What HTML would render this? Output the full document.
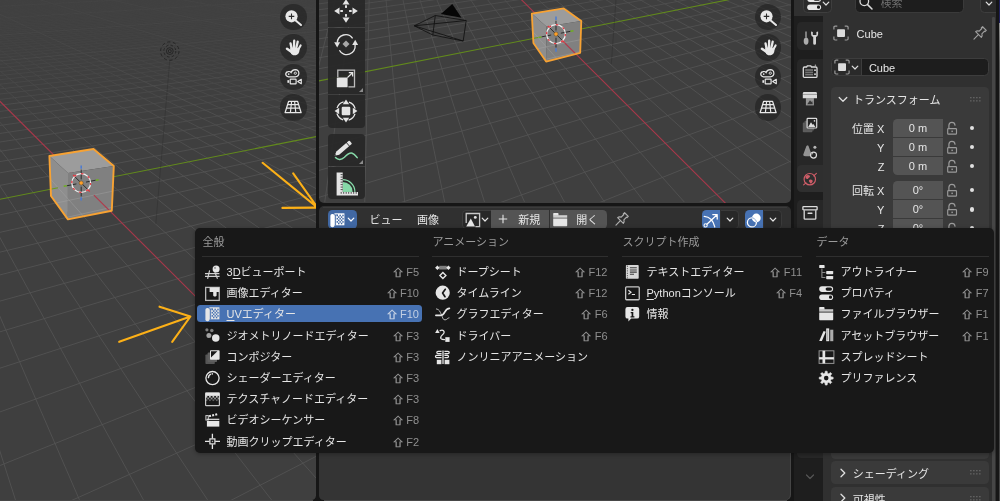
<!DOCTYPE html>
<html lang="ja"><head><meta charset="utf-8"><title>Blender - エディタータイプ</title>
<style>
*{box-sizing:border-box;margin:0;padding:0}
html,body{width:1000px;height:501px;overflow:hidden;background:#161616}
body{font-family:"Liberation Sans","Noto Sans CJK JP",sans-serif;font-size:11px;color:#e6e6e6;-webkit-font-smoothing:antialiased}
#root{will-change:transform;position:relative;width:1000px;height:501px;overflow:hidden;background:#161616}
.abs{position:absolute}
svg{display:block;overflow:visible}
/* ---------- menu ---------- */
#menu{position:absolute;left:195px;top:227.8px;width:799px;height:225.6px;background:#181818;border-radius:5px;box-shadow:0 1px 4px rgba(0,0,0,.32)}
#menu .hd{position:absolute;top:6.4px;height:16px;line-height:16px;color:#9a9a9a;font-size:11px;white-space:nowrap}
#menu .sep{position:absolute;top:28.2px;height:1px;background:#2f2f2f}
#menu .it{position:absolute;height:17px;border-radius:3.5px;white-space:nowrap}
#menu .it.sel{background:#4772b3}
#menu .it svg{position:absolute;left:7.5px;top:0.7px;width:16px;height:16px}
#menu .it .lb{position:absolute;left:29.5px;top:0;height:17px;line-height:19px;font-size:11px;color:#e6e6e6}
#menu .it .sc{position:absolute;right:3px;top:0;height:17px;line-height:19px;font-size:11px;color:#8f8f8f}
#menu .it.sel .sc{color:#c3cfe3}
#menu .it .sc i{font-style:normal;-webkit-text-stroke:0.45px currentColor;font-family:"Noto Sans CJK JP",sans-serif;font-size:11px;line-height:0;display:inline-block;width:9px;margin-right:4.5px;transform:translate(-0.6px,0.8px) scale(1.2,0.78);transform-origin:50% 50%;vertical-align:baseline}
u{text-decoration:underline;text-underline-offset:1.5px;text-decoration-thickness:1px}
/* ---------- viewports ---------- */
#lvp{position:absolute;left:0;top:0;width:316.2px;height:499.8px;background:#3f3f3f;overflow:hidden;border-radius:0 0 4.5px 0}
#mvp{position:absolute;left:319.2px;top:0;width:471.8px;height:202.5px;background:#3f3f3f;overflow:hidden;border-radius:0 0 5px 5px}
.nav{position:absolute;width:26.4px;height:26.4px;border-radius:50%;background:rgba(30,30,30,.6)}
.nav svg{position:absolute;left:3.2px;top:3.2px;width:20px;height:20px}
.nav svg{overflow:visible}
.tb{position:absolute;left:8.5px;width:37.7px;background:rgba(40,40,40,.93)}
.tb svg{position:absolute;left:4.6px;top:2.5px;width:28px;height:28px}
/* ---------- uv editor ---------- */
#uvh{position:absolute;left:319.2px;top:206px;width:471.8px;height:26px;background:#303030;border-radius:5px 5px 0 0}
#uvb{position:absolute;left:319.2px;top:232px;width:471.8px;height:267.8px;background:#343434;border-radius:0 0 5.5px 4.5px;box-shadow:inset -1px 0 0 #454545}
.bstrip{position:absolute;top:499.7px;height:1.3px;background:#484848}
#uvh .t{position:absolute;top:5px;height:18px;line-height:18.6px;font-size:11px;color:#e6e6e6;white-space:nowrap}
#uvh .btn{position:absolute;top:4.2px;height:18.6px}
/* ---------- properties ---------- */
#pr{position:absolute;left:794.4px;top:0;width:201.8px;height:501px;background:#303030;overflow:hidden}
#prtabs{position:absolute;left:0;top:16px;width:28.8px;height:485px;background:#1e1e1e}
.ptab{position:absolute;left:0;width:28.8px;height:26.6px}
.ptab svg{position:absolute;left:7.8px;top:5.3px;width:16px;height:16px}
.panel{position:absolute;left:36.8px;width:158px;background:#3a3a3a;border-radius:4.5px}
.panel .ph{position:absolute;left:22.5px;top:4px;height:17px;line-height:17.6px;font-size:11px;color:#e6e6e6;white-space:nowrap}
.fld{position:absolute;left:99px;width:49.2px;height:18.2px;background:#545454;text-align:center;line-height:18.8px;font-size:11px;color:#e6e6e6}
.flb{position:absolute;right:113px;height:18.4px;line-height:20.6px;font-size:11px;color:#e6e6e6;white-space:nowrap;text-align:right}
.dot{position:absolute;left:175.3px;width:4.4px;height:4.4px;border-radius:50%;background:#e0e0e0}

</style></head>
<body>
<div id="root">
<div id="lvp">
<svg class="abs" style="left:0;top:0;width:316.2px;height:501px" viewBox="0 0 316.2 501">
<defs><linearGradient id="lvpmfg" x1="0" y1="0" x2="0" y2="175" gradientUnits="userSpaceOnUse"><stop offset="0.000" stop-color="#fff" stop-opacity="0.1"/><stop offset="0.229" stop-color="#fff" stop-opacity="0.2"/><stop offset="0.457" stop-color="#fff" stop-opacity="0.45"/><stop offset="0.743" stop-color="#fff" stop-opacity="0.8"/><stop offset="1.000" stop-color="#fff" stop-opacity="1"/></linearGradient><mask id="lvpmf" maskUnits="userSpaceOnUse" x="0" y="0" width="316.2" height="501"><rect x="0" y="0" width="316.2" height="501" fill="url(#lvpmfg)"/></mask><linearGradient id="lvpmcg" x1="0" y1="0" x2="0" y2="150" gradientUnits="userSpaceOnUse"><stop offset="0.000" stop-color="#fff" stop-opacity="0.22"/><stop offset="0.267" stop-color="#fff" stop-opacity="0.38"/><stop offset="0.667" stop-color="#fff" stop-opacity="0.8"/><stop offset="1.000" stop-color="#fff" stop-opacity="1"/></linearGradient><mask id="lvpmc" maskUnits="userSpaceOnUse" x="0" y="0" width="316.2" height="501"><rect x="0" y="0" width="316.2" height="501" fill="url(#lvpmcg)"/></mask></defs>
<g mask="url(#lvpmf)"><path d="M-20.0 -19.8L-13.0 -20.0M-20.0 -19.4L-1.0 -20.0M-20.0 -19.0L11.0 -20.0M-20.0 -18.2L35.1 -20.0M-20.0 -17.8L47.1 -20.0M-20.0 -17.3L59.1 -20.0M-20.0 -16.9L71.2 -20.0M-20.0 -16.4L83.2 -20.0M-20.0 -16.0L95.2 -20.0M-20.0 -15.5L107.3 -20.0M-20.0 -15.1L119.3 -20.0M-20.0 -14.6L131.3 -20.0M-20.0 -13.6L155.4 -20.0M-20.0 -13.1L167.4 -20.0M-20.0 -12.6L179.4 -20.0M-20.0 -12.0L191.5 -20.0M-20.0 -11.5L203.5 -20.0M-20.0 -10.9L215.5 -20.0M-20.0 -10.4L227.6 -20.0M-20.0 -9.8L239.6 -20.0M-20.0 -9.2L251.6 -20.0M-20.0 -8.0L275.7 -20.0M-20.0 -7.3L287.7 -20.0M-20.0 -6.7L299.7 -20.0M-20.0 -6.0L311.8 -20.0M-20.0 -5.3L323.8 -20.0M-20.0 -4.6L335.8 -20.0M-20.0 -3.9L336.2 -19.5M-20.0 -3.2L336.2 -19.0M-20.0 -2.4L336.2 -18.4M-20.0 -0.8L336.2 -17.2M-20.0 -0.0L336.2 -16.6M-20.0 0.8L336.2 -16.0M-20.0 1.7L336.2 -15.4M-20.0 2.5L336.2 -14.8M-20.0 3.5L336.2 -14.1M-20.0 4.4L336.2 -13.4M-20.0 5.3L336.2 -12.7M-20.0 6.3L336.2 -12.0M-20.0 8.4L336.2 -10.5M-20.0 9.5L336.2 -9.7M-20.0 10.6L336.2 -8.9M-20.0 11.7L336.2 -8.0M-20.0 12.9L336.2 -7.1M-20.0 14.1L336.2 -6.3M-20.0 15.4L336.2 -5.3M-20.0 16.7L336.2 -4.4M-20.0 18.0L336.2 -3.4M-20.0 20.9L336.2 -1.3M-20.0 22.4L336.2 -0.2M-20.0 23.9L336.2 0.9M-20.0 25.5L336.2 2.1M-20.0 27.2L336.2 3.3M-20.0 28.9L336.2 4.6M-20.0 30.7L336.2 5.9M-20.0 32.6L336.2 7.3M-20.0 34.5L336.2 8.7M-20.0 38.7L336.2 11.8M-20.0 40.9L336.2 13.4M-20.0 43.2L336.2 15.1M-20.0 45.6L336.2 16.9M-20.0 48.1L336.2 18.7M-20.0 50.8L336.2 20.7M-20.0 53.6L336.2 22.7M-20.0 56.5L336.2 24.8M-20.0 59.5L336.2 27.1M-20.0 66.2L336.2 32.0M-20.0 69.8L336.2 34.6M-20.0 73.6L336.2 37.4M-20.0 77.6L336.2 40.3M-20.0 81.8L336.2 43.5M-20.0 86.4L336.2 46.8M-20.0 91.2L336.2 50.3M-20.0 96.4L336.2 54.1M-20.0 101.9L336.2 58.2M-20.0 114.1L336.2 67.2M-20.0 121.0L336.2 72.2M-20.0 128.3L336.2 77.6M-20.0 136.4L336.2 83.5M-20.0 388.9L22.2 521.0M-20.0 145.1L336.2 89.9M-20.0 270.4L88.6 521.0M-20.0 154.6L336.2 96.9M-20.0 201.2L155.0 521.0M-20.0 165.0L336.2 104.5M-20.0 155.8L221.5 521.0M-20.0 176.4L336.2 112.9M-20.0 123.7L287.9 521.0M-20.0 189.1L336.2 122.2M-20.0 99.8L336.2 500.7M-20.0 219.0L336.2 144.2M-20.0 66.7L336.2 385.8M-20.0 236.8L336.2 157.2M-20.0 54.8L336.2 344.3M-20.0 256.9L336.2 172.0M-20.0 44.8L336.2 309.9M-20.0 280.0L336.2 189.0M-20.0 36.4L336.2 280.8M-20.0 306.6L336.2 208.5M-20.0 29.3L336.2 255.9M-20.0 337.8L336.2 231.4M-20.0 23.1L336.2 234.4M-20.0 374.7L336.2 258.5M-20.0 17.7L336.2 215.6M-20.0 419.1L336.2 291.1M-20.0 12.9L336.2 199.1M-20.0 473.5L336.2 331.1M-20.0 8.6L336.2 184.4M191.0 521.0L336.2 446.0M-20.0 1.5L336.2 159.5M-20.0 -1.6L336.2 148.8M-20.0 -4.4L336.2 139.1M-20.0 -7.0L336.2 130.3M-20.0 -9.3L336.2 122.2M-20.0 -11.5L336.2 114.7M-20.0 -13.4L336.2 107.8M-20.0 -15.3L336.2 101.5M-20.0 -17.0L336.2 95.6M-19.9 -20.0L336.2 85.0M-15.1 -20.0L336.2 80.2M-10.2 -20.0L336.2 75.7M-5.4 -20.0L336.2 71.5M-0.5 -20.0L336.2 67.5M4.3 -20.0L336.2 63.8M9.2 -20.0L336.2 60.3M14.0 -20.0L336.2 56.9M18.9 -20.0L336.2 53.8M28.6 -20.0L336.2 47.9M33.4 -20.0L336.2 45.2M38.2 -20.0L336.2 42.6M43.1 -20.0L336.2 40.2M47.9 -20.0L336.2 37.8M52.8 -20.0L336.2 35.6M57.6 -20.0L336.2 33.4M62.5 -20.0L336.2 31.4M67.3 -20.0L336.2 29.4M77.0 -20.0L336.2 25.7M81.9 -20.0L336.2 24.0M86.7 -20.0L336.2 22.3M91.5 -20.0L336.2 20.7M96.4 -20.0L336.2 19.2M101.2 -20.0L336.2 17.7M106.1 -20.0L336.2 16.2M110.9 -20.0L336.2 14.8M115.8 -20.0L336.2 13.5M125.5 -20.0L336.2 11.0M130.3 -20.0L336.2 9.8M135.2 -20.0L336.2 8.6M140.0 -20.0L336.2 7.4M144.8 -20.0L336.2 6.4M149.7 -20.0L336.2 5.3M154.5 -20.0L336.2 4.3M159.4 -20.0L336.2 3.3M164.2 -20.0L336.2 2.3M173.9 -20.0L336.2 0.4M178.8 -20.0L336.2 -0.5M183.6 -20.0L336.2 -1.3M188.5 -20.0L336.2 -2.2M193.3 -20.0L336.2 -3.0M198.1 -20.0L336.2 -3.8M203.0 -20.0L336.2 -4.6M207.8 -20.0L336.2 -5.3M212.7 -20.0L336.2 -6.1M222.4 -20.0L336.2 -7.5M227.2 -20.0L336.2 -8.1M232.1 -20.0L336.2 -8.8M236.9 -20.0L336.2 -9.5M241.8 -20.0L336.2 -10.1M246.6 -20.0L336.2 -10.7M251.4 -20.0L336.2 -11.3M256.3 -20.0L336.2 -11.9M261.1 -20.0L336.2 -12.5M270.8 -20.0L336.2 -13.6M275.7 -20.0L336.2 -14.1M280.5 -20.0L336.2 -14.7M285.4 -20.0L336.2 -15.2M290.2 -20.0L336.2 -15.7M295.1 -20.0L336.2 -16.2M299.9 -20.0L336.2 -16.7M304.8 -20.0L336.2 -17.1M309.6 -20.0L336.2 -17.6M319.3 -20.0L336.2 -18.5M324.1 -20.0L336.2 -18.9M329.0 -20.0L336.2 -19.4M333.8 -20.0L336.2 -19.8" stroke="#545454" stroke-width="0.85" fill="none"/></g>
<g mask="url(#lvpmc)"><path d="M-20.0 -18.6L23.0 -20.0M-20.0 -14.1L143.3 -20.0M-20.0 -8.6L263.6 -20.0M-20.0 -1.6L336.2 -17.8M-20.0 7.3L336.2 -11.2M-20.0 19.4L336.2 -2.4M-20.0 36.6L336.2 10.2M-20.0 62.8L336.2 29.5M-20.0 107.8L336.2 62.5M26.1 521.0L336.2 381.2M-20.0 4.9L336.2 171.3M-20.0 -18.6L336.2 90.1M23.7 -20.0L336.2 50.8M72.2 -20.0L336.2 27.5M120.6 -20.0L336.2 12.2M169.1 -20.0L336.2 1.3M217.5 -20.0L336.2 -6.8M266.0 -20.0L336.2 -13.1M314.4 -20.0L336.2 -18.1" stroke="#545454" stroke-width="0.85" fill="none"/></g>
<path d="M-20.0 81.4L336.2 436.7" stroke="#a8384a" stroke-width="1.1" fill="none"/>
<path d="M-20.0 203.2L336.2 132.6" stroke="#628a1c" stroke-width="1.1" fill="none"/>
<path d="M169.8 60.1L155.8 224" stroke="#1c1c1c" stroke-width="0.8" stroke-opacity="0.3"/><g fill="none" stroke="#161616" stroke-opacity=".7" stroke-width=".9"><circle cx="169.8" cy="51.1" r="9.2" stroke-dasharray="3.2 2.58"/><circle cx="169.8" cy="51.1" r="6" stroke-dasharray="2.6 2.11"/><circle cx="169.8" cy="51.1" r="3.4"/><circle cx="169.8" cy="51.1" r="1.5"/></g><polygon points="49.4,156.0 93.5,149.0 113.8,166.0 68.0,173.0" fill="#9c9c9c"/><polygon points="49.4,156.0 68.0,173.0 67.9,219.4 51.0,196.0" fill="#8e8e8e"/><polygon points="68.0,173.0 113.8,166.0 111.8,210.8 67.9,219.4" fill="#808080"/><clipPath id="lcc"><polygon points="49.4,156.0 93.5,149.0 113.8,166.0 111.8,210.8 67.9,219.4 51.0,196.0"/></clipPath><g clip-path="url(#lcc)"><path d="M-70.9 229.7L223.9 167.8M8.7 132.1L147.1 287.9M-65.4 246.9L241.7 178.3M-11.2 135.0L114.7 297.6M-59.2 266.3L261.2 189.9M-31.7 138.1L80.5 307.8" stroke="#b4b4b4" stroke-opacity=".38" stroke-width=".8" fill="none"/><path d="M93.9 195.1L228.9 329.7" stroke="#b03a4c" stroke-width="1.1"/><path d="M58.1 187.7L-137.7 226.6" stroke="#6b9a1e" stroke-width="1.1"/></g><polygon points="49.4,156.0 93.5,149.0 113.8,166.0 111.8,210.8 67.9,219.4 51.0,196.0" fill="none" stroke="#f7a233" stroke-width="1.90" stroke-linejoin="round"/><path d="M81.2 179.4L81.2 169.6M81.2 186.6L81.2 196.4M86.0 182.1L95.7 180.2M76.4 183.9L66.7 185.8M74.0 175.8L88.4 190.2" stroke="#1c1c1c" stroke-opacity=".85" stroke-width="1"/><circle cx="81.2" cy="183" r="9.4" fill="none" stroke="#f0f0f0" stroke-width="1.25"/><circle cx="81.2" cy="183" r="9.4" fill="none" stroke="#e63a44" stroke-width="1.25" stroke-dasharray="2.36 5.02" stroke-dashoffset="0.37"/><path d="M81.2 168.8L81.2 165.4M81.2 197.2L81.2 200.6" stroke="#4b7bd2" stroke-width="1.5"/><path d="M95.7 180.2L98.7 179.7M66.7 185.8L63.7 186.3" stroke="#6fae22" stroke-width="1.5"/><path d="M88.0 189.8L89.8 191.6M74.4 176.2L73.1 174.9" stroke="#e0353f" stroke-width="1.3"/><circle cx="81.2" cy="183" r="2.1" fill="#ffa028" stroke="#5a4a30" stroke-width=".5"/>
</svg>
<div class="nav" style="left:280.2px;top:4.1px"><svg viewBox="0 0 20 20" style="color:#e8e8e8"><path d="M12.4 13.2L18 18" stroke="currentColor" stroke-width="2" stroke-linecap="round"/><circle cx="8.5" cy="9.3" r="6.1" fill="currentColor"/><path d="M8.5 6.6V12.2M5.7 9.4H11.3" stroke="#2a2a2a" stroke-width="1.1"/></svg></div>
<div class="nav" style="left:280.2px;top:34.2px"><svg viewBox="0 0 20 20" style="color:#e8e8e8"><g stroke="currentColor" stroke-linecap="round" fill="none"><path d="M8.7 12L7.5 6.3M10.9 11L11.2 3.7M13.2 11.2L14.7 4.7" stroke-width="2.3"/><path d="M15.3 12.6L17.6 8.4" stroke-width="2.1"/><path d="M8.6 15L4 11.8" stroke-width="2.5"/></g><path d="M7.4 10.6L16.5 11.2Q17 15.8 14 17.8Q11.2 19.1 8.9 17.4Q6.6 15.4 7.4 10.6Z" fill="currentColor"/></svg></div>
<div class="nav" style="left:280.2px;top:64.0px"><svg viewBox="0 0 20 20" style="color:#e8e8e8"><path d="M5.2 4.6Q7 4.2 8.1 5.5Q9.2 2.6 12.2 2.6Q15.8 2.8 15.9 6.3Q15.8 9.6 12.2 9.8H5.6Q2.8 9.6 2.7 7.1Q2.8 5 5.2 4.6Z" fill="none" stroke="currentColor" stroke-width="1.2"/><circle cx="5.7" cy="7.1" r="0.85" fill="currentColor"/><circle cx="12.3" cy="6.2" r="1.15" fill="none" stroke="currentColor" stroke-width=".9"/><rect x="7.2" y="12.2" width="5.9" height="4.6" rx="0.6" fill="none" stroke="currentColor" stroke-width="1.2"/><path d="M14.7 14.5L18.3 12.3V16.7Z" fill="none" stroke="currentColor" stroke-width="1.1" stroke-linejoin="round"/><rect x="4.4" y="13.2" width="1.7" height="2.6" fill="currentColor"/></svg></div>
<div class="nav" style="left:280.2px;top:94.4px"><svg viewBox="0 0 20 20" style="color:#e8e8e8"><path d="M5.6 3.4H14.6L18.1 14.6H2.1Z" fill="none" stroke="currentColor" stroke-width="1.3" stroke-linejoin="round"/><path d="M8.6 3.4L7.4 14.6M11.6 3.4L12.8 14.6M4.7 6.6H15.5M3.6 10.1H16.6" fill="none" stroke="currentColor" stroke-width="1.15"/></svg></div>
</div>
<div id="mvp">
<svg class="abs" style="left:0;top:0;width:471.8px;height:202.5px" viewBox="0 0 471.8 202.5">
<defs><linearGradient id="mvpmfg" x1="0" y1="-40" x2="0" y2="40" gradientUnits="userSpaceOnUse"><stop offset="0.000" stop-color="#fff" stop-opacity="0.5"/><stop offset="0.625" stop-color="#fff" stop-opacity="0.85"/><stop offset="1.000" stop-color="#fff" stop-opacity="1"/></linearGradient><mask id="mvpmf" maskUnits="userSpaceOnUse" x="0" y="0" width="471.8" height="202.5"><rect x="0" y="0" width="471.8" height="202.5" fill="url(#mvpmfg)"/></mask><linearGradient id="mvpmcg" x1="0" y1="-40" x2="0" y2="30" gradientUnits="userSpaceOnUse"><stop offset="0.000" stop-color="#fff" stop-opacity="0.7"/><stop offset="0.714" stop-color="#fff" stop-opacity="0.95"/><stop offset="1.000" stop-color="#fff" stop-opacity="1"/></linearGradient><mask id="mvpmc" maskUnits="userSpaceOnUse" x="0" y="0" width="471.8" height="202.5"><rect x="0" y="0" width="471.8" height="202.5" fill="url(#mvpmcg)"/></mask></defs>
<g mask="url(#mvpmf)"><path d="M-20.0 -17.9L-1.0 -20.0M-20.0 -13.6L35.4 -20.0M-8.1 -20.0L-20.0 4.9M-20.0 -9.1L71.9 -20.0M6.5 -20.0L-20.0 53.1M-20.0 -4.3L108.3 -20.0M21.2 -20.0L-20.0 145.3M-20.0 6.5L181.2 -20.0M50.6 -20.0L45.3 222.5M-20.0 12.5L217.6 -20.0M65.2 -20.0L87.6 222.5M-20.0 19.0L254.1 -20.0M79.9 -20.0L129.9 222.5M-20.0 26.1L290.5 -20.0M94.6 -20.0L172.1 222.5M-20.0 33.7L326.9 -20.0M109.3 -20.0L214.4 222.5M-20.0 42.1L363.4 -20.0M124.0 -20.0L256.7 222.5M-20.0 51.3L399.8 -20.0M138.6 -20.0L299.0 222.5M-20.0 61.4L436.3 -20.0M153.3 -20.0L341.2 222.5M-20.0 72.5L472.7 -20.0M168.0 -20.0L383.5 222.5M-20.0 98.8L491.8 -8.7M197.3 -20.0L468.0 222.5M-20.0 114.4L491.8 0.1M212.0 -20.0L491.8 207.4M-20.0 132.2L491.8 10.2M226.7 -20.0L491.8 177.3M-20.0 152.5L491.8 21.7M241.4 -20.0L491.8 151.8M-20.0 175.9L491.8 35.0M256.0 -20.0L491.8 130.0M-20.0 203.3L491.8 50.5M270.7 -20.0L491.8 111.2M20.8 222.5L491.8 68.9M285.4 -20.0L491.8 94.7M125.8 222.5L491.8 91.0M300.1 -20.0L491.8 80.2M230.7 222.5L491.8 118.1M314.8 -20.0L491.8 67.4M440.6 222.5L491.8 196.1M344.1 -20.0L491.8 45.5M358.8 -20.0L491.8 36.2M373.5 -20.0L491.8 27.7M388.1 -20.0L491.8 19.9M402.8 -20.0L491.8 12.8M417.5 -20.0L491.8 6.3M432.2 -20.0L491.8 0.3M446.8 -20.0L491.8 -5.3M461.5 -20.0L491.8 -10.4M490.9 -20.0L491.8 -19.7" stroke="#545454" stroke-width="0.85" fill="none"/></g>
<g mask="url(#mvpmc)"><path d="M-20.0 0.9L144.8 -20.0M35.9 -20.0L3.0 222.5M335.7 222.5L491.8 152.1M329.4 -20.0L491.8 55.9M476.2 -20.0L491.8 -15.2" stroke="#545454" stroke-width="0.85" fill="none"/></g>
<path d="M182.7 -20.0L425.8 222.5" stroke="#a8384a" stroke-width="1.1" fill="none"/>
<path d="M-20.0 84.9L491.8 -16.6" stroke="#628a1c" stroke-width="1.1" fill="none"/>
<g stroke="#101010" stroke-width="0.85" fill="none" stroke-linejoin="round"><path d="M116.3 15.5L147.2 20.5L144.2 41.0L113.8 35.0Z"/><path d="M95.3 25.8L116.3 15.5M95.3 25.8L147.2 20.5M95.3 25.8L144.2 41.0M95.3 25.8L113.8 35.0"/></g><polygon points="121.8,14 133.3,4 142.5,17.8" fill="#060606"/><path d="M297.0 0L292.3 64" stroke="#1c1c1c" stroke-width="0.8" stroke-opacity="0.3"/><polygon points="212.8,13.6 244.7,8.4 262.3,20.9 227.4,26.5" fill="#9c9c9c"/><polygon points="212.8,13.6 227.4,26.5 227.1,61.6 214.4,42.9" fill="#8e8e8e"/><polygon points="227.4,26.5 262.3,20.9 261.2,52.8 227.1,61.6" fill="#808080"/><clipPath id="mcc"><polygon points="212.8,13.6 244.7,8.4 262.3,20.9 261.2,52.8 227.1,61.6 214.4,42.9"/></clipPath><g clip-path="url(#mcc)"><path d="M123.0 68.8L342.6 22.6M182.3 -3.9L285.4 112.1M127.1 81.6L355.8 30.5M167.5 -1.7L261.3 119.3M131.7 96.0L370.4 39.1M152.2 0.5L235.8 126.9" stroke="#b4b4b4" stroke-opacity=".38" stroke-width=".8" fill="none"/><path d="M245.8 43.0L346.3 143.2" stroke="#b03a4c" stroke-width="1.1"/><path d="M219.1 37.5L73.2 66.4" stroke="#6b9a1e" stroke-width="1.1"/></g><polygon points="212.8,13.6 244.7,8.4 262.3,20.9 261.2,52.8 227.1,61.6 214.4,42.9" fill="none" stroke="#f7a233" stroke-width="1.80" stroke-linejoin="round"/><path d="M237.0 30.5L237.0 20.7M237.0 37.7L237.0 47.5M241.8 33.2L251.5 31.3M232.2 35.0L222.5 36.9M229.8 26.9L244.2 41.3" stroke="#1c1c1c" stroke-opacity=".85" stroke-width="1"/><circle cx="237.00000000000006" cy="34.1" r="9.4" fill="none" stroke="#f0f0f0" stroke-width="1.25"/><circle cx="237.00000000000006" cy="34.1" r="9.4" fill="none" stroke="#e63a44" stroke-width="1.25" stroke-dasharray="2.36 5.02" stroke-dashoffset="0.37"/><path d="M237.0 19.9L237.0 16.5M237.0 48.3L237.0 51.7" stroke="#4b7bd2" stroke-width="1.5"/><path d="M251.5 31.3L254.5 30.8M222.5 36.9L219.5 37.4" stroke="#6fae22" stroke-width="1.5"/><path d="M243.8 40.9L245.6 42.7M230.2 27.3L228.9 26.0" stroke="#e0353f" stroke-width="1.3"/><circle cx="237.00000000000006" cy="34.1" r="2.1" fill="#ffa028" stroke="#5a4a30" stroke-width=".5"/>
</svg>
<div class="nav" style="left:435.9px;top:4.1px"><svg viewBox="0 0 20 20" style="color:#e8e8e8"><path d="M12.4 13.2L18 18" stroke="currentColor" stroke-width="2" stroke-linecap="round"/><circle cx="8.5" cy="9.3" r="6.1" fill="currentColor"/><path d="M8.5 6.6V12.2M5.7 9.4H11.3" stroke="#2a2a2a" stroke-width="1.1"/></svg></div>
<div class="nav" style="left:435.9px;top:34.2px"><svg viewBox="0 0 20 20" style="color:#e8e8e8"><g stroke="currentColor" stroke-linecap="round" fill="none"><path d="M8.7 12L7.5 6.3M10.9 11L11.2 3.7M13.2 11.2L14.7 4.7" stroke-width="2.3"/><path d="M15.3 12.6L17.6 8.4" stroke-width="2.1"/><path d="M8.6 15L4 11.8" stroke-width="2.5"/></g><path d="M7.4 10.6L16.5 11.2Q17 15.8 14 17.8Q11.2 19.1 8.9 17.4Q6.6 15.4 7.4 10.6Z" fill="currentColor"/></svg></div>
<div class="nav" style="left:435.9px;top:64.0px"><svg viewBox="0 0 20 20" style="color:#e8e8e8"><path d="M5.2 4.6Q7 4.2 8.1 5.5Q9.2 2.6 12.2 2.6Q15.8 2.8 15.9 6.3Q15.8 9.6 12.2 9.8H5.6Q2.8 9.6 2.7 7.1Q2.8 5 5.2 4.6Z" fill="none" stroke="currentColor" stroke-width="1.2"/><circle cx="5.7" cy="7.1" r="0.85" fill="currentColor"/><circle cx="12.3" cy="6.2" r="1.15" fill="none" stroke="currentColor" stroke-width=".9"/><rect x="7.2" y="12.2" width="5.9" height="4.6" rx="0.6" fill="none" stroke="currentColor" stroke-width="1.2"/><path d="M14.7 14.5L18.3 12.3V16.7Z" fill="none" stroke="currentColor" stroke-width="1.1" stroke-linejoin="round"/><rect x="4.4" y="13.2" width="1.7" height="2.6" fill="currentColor"/></svg></div>
<div class="nav" style="left:435.9px;top:94.4px"><svg viewBox="0 0 20 20" style="color:#e8e8e8"><path d="M5.6 3.4H14.6L18.1 14.6H2.1Z" fill="none" stroke="currentColor" stroke-width="1.3" stroke-linejoin="round"/><path d="M8.6 3.4L7.4 14.6M11.6 3.4L12.8 14.6M4.7 6.6H15.5M3.6 10.1H16.6" fill="none" stroke="currentColor" stroke-width="1.15"/></svg></div>
<div class="tb" style="top:-5.8px;height:33px;border-radius:0"><svg viewBox="0 0 28 28"><g transform="rotate(0 14 14)"><path d="M14 2.2L17.5 7.5H10.5Z" fill="#e4e4e4"/><rect x="13" y="8.3" width="2" height="2.6" fill="#e4e4e4"/></g><g transform="rotate(90 14 14)"><path d="M14 2.2L17.5 7.5H10.5Z" fill="#e4e4e4"/><rect x="13" y="8.3" width="2" height="2.6" fill="#e4e4e4"/></g><g transform="rotate(180 14 14)"><path d="M14 2.2L17.5 7.5H10.5Z" fill="#e4e4e4"/><rect x="13" y="8.3" width="2" height="2.6" fill="#e4e4e4"/></g><g transform="rotate(270 14 14)"><path d="M14 2.2L17.5 7.5H10.5Z" fill="#e4e4e4"/><rect x="13" y="8.3" width="2" height="2.6" fill="#e4e4e4"/></g></svg></div>
<div class="tb" style="top:27.7px;height:33px;border-radius:0"><svg viewBox="0 0 28 28"><path d="M14 10.5L17.5 14L14 17.5L10.5 14Z" fill="#a8a8a8"/><path d="M20.6 8.3A8.4 8.4 0 0 0 5.3 12.6" fill="none" stroke="#e4e4e4" stroke-width="1.35"/><path d="M2.2 12.3H8.1L5.2 17.6Z" fill="#e4e4e4"/><path d="M7.4 20.2A8.4 8.4 0 0 0 23.1 15" fill="none" stroke="#e4e4e4" stroke-width="1.35"/><path d="M26.1 14.9H20.2L23.2 9.7Z" fill="#e4e4e4"/></svg></div>
<div class="tb" style="top:61.2px;height:33px;border-radius:0"><svg viewBox="0 0 28 28"><path d="M5.8 13V6.1H22.5V22.9H16.4" fill="none" stroke="#bdbdbd" stroke-width="1.3"/><rect x="4.8" y="13.5" width="10.8" height="9.8" rx="0.6" fill="#e4e4e4"/><path d="M15.4 13.6L20 9.2M16.8 8.6H20.6V12.4" fill="none" stroke="#e4e4e4" stroke-width="1.3"/></svg><svg class="abs" style="left:31.5px;top:26.5px;width:4px;height:4px" viewBox="0 0 4 4"><path d="M4 0V4H0Z" fill="#8c8c8c"/></svg></div>
<div class="tb" style="top:94.7px;height:33.1px;border-radius:0 0 4px 4px"><svg viewBox="0 0 28 28"><rect x="9.7" y="9.7" width="8.6" height="8.6" rx="1.2" fill="#e4e4e4"/><circle cx="14" cy="14" r="9.4" fill="none" stroke="#e4e4e4" stroke-width="1.3" stroke-dasharray="9.2 5.565" stroke-dashoffset="-2.78"/><path d="M14 2.6L17.2 7.2H10.8Z" fill="#e4e4e4" transform="rotate(0 14 14)"/><path d="M14 2.6L17.2 7.2H10.8Z" fill="#e4e4e4" transform="rotate(90 14 14)"/><path d="M14 2.6L17.2 7.2H10.8Z" fill="#e4e4e4" transform="rotate(180 14 14)"/><path d="M14 2.6L17.2 7.2H10.8Z" fill="#e4e4e4" transform="rotate(270 14 14)"/></svg></div>
<div class="tb" style="top:134.3px;height:31.9px;border-radius:4px 4px 0 0"><svg viewBox="0 0 28 28"><path d="M3.5 20.6C6 23.4 9.4 23 12.4 20.2C15.2 17.4 17.6 15.4 20.2 16.2C22.6 17 23.6 18.8 25.2 20.6" fill="none" stroke="#86d9a8" stroke-width="1.5" stroke-linecap="round"/><g transform="translate(2.6 18.8) rotate(-40.6)"><path d="M0 0L4.2 -2.2H17.2V2.2H4.2Z" fill="#e4e4e4"/><path d="M17.9 -2.2H20.2Q21.2 -2.2 21.2 -1.2V1.2Q21.2 2.2 20.2 2.2H17.9Z" fill="#e4e4e4"/><path d="M0 0L1.6 -0.85V0.85Z" fill="#2b2b2b"/></g></svg><svg class="abs" style="left:31.5px;top:25.4px;width:4px;height:4px" viewBox="0 0 4 4"><path d="M4 0V4H0Z" fill="#8c8c8c"/></svg></div>
<div class="tb" style="top:166.8px;height:32.7px;border-radius:0 0 4px 4px"><svg viewBox="0 0 28 28"><path d="M10.7 22.9V12.9A10 10 0 0 1 20.7 22.9Z" fill="#86d9a8"/><path d="M10.7 10.7A12.2 12.2 0 0 1 22.9 22.9" fill="none" stroke="#86d9a8" stroke-width="1.2"/><path d="M4.6 3.4H10.7V22.9H26V26.6H4.6Z" fill="#e4e4e4"/><path d="M8.6 5.6H10.7M8.6 8.1H10.7M8.6 10.6H10.7M8.6 13.1H10.7M8.6 15.6H10.7M8.6 18.1H10.7M8.6 20.6H10.7M9.2 22.9V24.8M11.7 22.9V24.8M14.2 22.9V24.8M16.7 22.9V24.8M19.2 22.9V24.8M21.7 22.9V24.8M24.2 22.9V24.8" stroke="#2b2b2b" stroke-width=".8"/></svg></div>
</div>
<div id="uvb"></div><div class="bstrip" style="left:0;width:312.5px"></div><div class="bstrip" style="left:323.5px;width:463.5px"></div>
<div id="uvh">
<div class="abs" style="left:4px;top:1.1px;width:463.8px;height:1px;background:#3b3b3b"></div>
<div class="btn" style="left:8.4px;width:29.6px;background:#4168a3;border-radius:4.5px"></div>
<div class="abs" style="left:11.1px;top:5.5px;width:16px;height:16px"><svg viewBox="0 0 16 16" style="color:#ffffff"><rect x="4.4" y="1.3" width="10" height="12" fill="currentColor"/><rect x="6.60" y="2.70" width="1.42" height="1.6" fill="#4168a3"/><rect x="6.60" y="5.90" width="1.42" height="1.6" fill="#4168a3"/><rect x="6.60" y="9.10" width="1.42" height="1.6" fill="#4168a3"/><rect x="8.02" y="4.30" width="1.42" height="1.6" fill="#4168a3"/><rect x="8.02" y="7.50" width="1.42" height="1.6" fill="#4168a3"/><rect x="8.02" y="10.70" width="1.42" height="1.6" fill="#4168a3"/><rect x="9.44" y="2.70" width="1.42" height="1.6" fill="#4168a3"/><rect x="9.44" y="5.90" width="1.42" height="1.6" fill="#4168a3"/><rect x="9.44" y="9.10" width="1.42" height="1.6" fill="#4168a3"/><rect x="10.86" y="4.30" width="1.42" height="1.6" fill="#4168a3"/><rect x="10.86" y="7.50" width="1.42" height="1.6" fill="#4168a3"/><rect x="10.86" y="10.70" width="1.42" height="1.6" fill="#4168a3"/><rect x="12.28" y="2.70" width="1.42" height="1.6" fill="#4168a3"/><rect x="12.28" y="5.90" width="1.42" height="1.6" fill="#4168a3"/><rect x="12.28" y="9.10" width="1.42" height="1.6" fill="#4168a3"/><path d="M5.6 3V13.3" stroke="#4168a3" stroke-width="0.9"/><path d="M3.4 2.9H8" stroke="#4168a3" stroke-width="0.8"/><rect x="0.4" y="1.9" width="4.1" height="13.4" rx="1.8" fill="currentColor"/></svg></div>
<svg class="abs" style="left:28.0px;top:9.8px;width:8px;height:8px" viewBox="0 0 8 8"><path d="M1.2 2.2 L4 5 L6.8 2.2" fill="none" stroke="#fff" stroke-width="1.2" stroke-linecap="round" stroke-linejoin="round"/></svg>
<div class="t" style="left:50.3px">ビュー</div>
<div class="t" style="left:97.8px">画像</div>
<div class="btn" style="left:142.8px;width:29.5px;background:#282828;border:1px solid #3d3d3d;border-right:none;border-radius:4.5px 0 0 4.5px"></div>
<div class="abs" style="left:145.4px;top:5.5px;width:16px;height:16px"><svg viewBox="0 0 16 16" style="color:#e6e6e6"><path d="M10.4 14.7H14.6V1.5H1.2V11" fill="none" stroke="currentColor" stroke-opacity=".85" stroke-width="1.3"/><path d="M5.8 6.4L10 14.6H1.2Z" fill="currentColor"/><circle cx="10.3" cy="5.4" r="1.45" fill="currentColor"/></svg></div>
<svg class="abs" style="left:162.1px;top:9.8px;width:8px;height:8px" viewBox="0 0 8 8"><path d="M1.2 2.2 L4 5 L6.8 2.2" fill="none" stroke="#e6e6e6" stroke-width="1.2" stroke-linecap="round" stroke-linejoin="round"/></svg>
<div class="btn" style="left:172.0px;width:58px;background:#545454"></div>
<svg class="abs" style="left:178.6px;top:8.2px;width:10px;height:10px" viewBox="0 0 10 10"><path d="M5 0.8V9.2M0.8 5H9.2" stroke="#e6e6e6" stroke-width="1.1"/></svg>
<div class="t" style="left:199.1px">新規</div>
<div class="btn" style="left:231.1px;width:56.9px;background:#545454;border-radius:0 4.5px 4.5px 0"></div>
<div class="abs" style="left:233.8px;top:5.6px;width:16px;height:16px"><svg viewBox="0 0 16 16" style="color:#e6e6e6"><path d="M0.9 1.1H4.8Q5.5 1.1 5.5 1.8V3.4H0.2V1.8Q0.2 1.1 0.9 1.1Z" fill="currentColor"/><rect x="0.2" y="3.2" width="14" height="2.5" fill="currentColor" fill-opacity=".85"/><path d="M0.2 6.6H14.2V13.6Q14.2 14.3 13.5 14.3H0.9Q0.2 14.3 0.2 13.6Z" fill="currentColor"/></svg></div>
<div class="t" style="left:257.0px">開く</div>
<div class="abs" style="left:292.7px;top:7px;width:16px;height:16px"><svg viewBox="0 0 16 16" style="color:#b0b0b0"><g transform="translate(9.2 6.8) rotate(45)" fill="none" stroke="currentColor" stroke-width="1.15" stroke-linejoin="round" stroke-linecap="round"><path d="M-2.6 -7.4H2.6V-5.6H1.9V-1.9Q4 -0.9 4 1H-4Q-4 -0.9 -1.9 -1.9V-5.6H-2.6Z"/><path d="M0 1.2V7.4"/></g></svg></div>
<div class="btn" style="left:383.3px;width:18px;background:#4772b3;border-radius:4.5px 0 0 4.5px"></div>
<div class="abs" style="left:384.3px;top:5.5px;width:16px;height:16px"><svg viewBox="0 0 16 16" style="color:#ffffff"><path d="M1.2 4.4Q9.4 5 11.8 15" fill="none" stroke="currentColor" stroke-width="1.25" stroke-linecap="round"/><circle cx="2.6" cy="13.4" r="1.6" fill="none" stroke="currentColor" stroke-width="1.1"/><path d="M3.9 12.2L13.8 3M9.8 2.6H14.2V7" fill="none" stroke="currentColor" stroke-width="1.25" stroke-linecap="round" stroke-linejoin="round"/></svg></div>
<div class="btn" style="left:402.1px;width:17.5px;background:#282828;border:1px solid #3a3a3a;border-left:none;border-radius:0 4.5px 4.5px 0"></div>
<svg class="abs" style="left:406.6px;top:9.8px;width:8px;height:8px" viewBox="0 0 8 8"><path d="M1.2 2.2 L4 5 L6.8 2.2" fill="none" stroke="#e6e6e6" stroke-width="1.2" stroke-linecap="round" stroke-linejoin="round"/></svg>
<div class="btn" style="left:426.3px;width:18px;background:#4772b3;border-radius:4.5px 0 0 4.5px"></div>
<div class="abs" style="left:427.3px;top:5.5px;width:16px;height:16px"><svg viewBox="0 0 16 16" style="color:#ffffff"><circle cx="10.3" cy="6" r="4.4" fill="currentColor"/><circle cx="5.9" cy="10.4" r="4.5" fill="none" stroke="currentColor" stroke-width="1.25"/><path d="M6.4 5.9Q9.6 6.6 10.4 9.9" fill="none" stroke="#4772b3" stroke-width="1" stroke-dasharray="1.2 1"/></svg></div>
<div class="btn" style="left:445.1px;width:17.5px;background:#282828;border:1px solid #3a3a3a;border-left:none;border-radius:0 4.5px 4.5px 0"></div>
<svg class="abs" style="left:449.6px;top:9.8px;width:8px;height:8px" viewBox="0 0 8 8"><path d="M1.2 2.2 L4 5 L6.8 2.2" fill="none" stroke="#e6e6e6" stroke-width="1.2" stroke-linecap="round" stroke-linejoin="round"/></svg>
</div>
<div id="pr">
<div class="abs" style="left:8.6px;top:-5px;width:29.2px;height:18px;background:#2a2a2a;border:1px solid #3e3e3e;border-radius:4.5px"></div>
<div class="abs" style="left:12.2px;top:-5.1px;width:16px;height:16px"><svg viewBox="0 0 16 16" style="color:#e6e6e6"><rect x="0.2" y="1.3" width="13.9" height="5.6" rx="2.8" fill="currentColor"/><rect x="6.6" y="2.5" width="6.4" height="3.2" rx="1.6" fill="#181818"/><rect x="0.2" y="9.4" width="13.9" height="5.6" rx="2.8" fill="currentColor"/><rect x="10" y="10.6" width="3" height="3.2" rx="1.3" fill="#181818"/></svg></div>
<svg class="abs" style="left:28px;top:0;width:8px;height:8px" viewBox="0 0 8 8"><path d="M1.2 2.2 L4 5 L6.8 2.2" fill="none" stroke="#e0e0e0" stroke-width="1.2" stroke-linecap="round" stroke-linejoin="round"/></svg>
<div class="abs" style="left:60.6px;top:-5px;width:109px;height:18px;background:#1d1d1d;border:1px solid #3a3a3a;border-radius:4.5px"></div>
<svg class="abs" style="left:63.5px;top:-5.5px;width:16px;height:16px" viewBox="0 0 16 16"><circle cx="6.3" cy="6.3" r="4.3" fill="none" stroke="#dcdcdc" stroke-width="1.3"/><path d="M9.6 9.6 L14 14" stroke="#dcdcdc" stroke-width="1.5" stroke-linecap="round"/></svg>
<div class="abs" style="left:86px;top:-5.5px;height:16px;line-height:16px;font-size:11px;color:#6f6f6f">検索</div>
<div class="abs" style="left:186px;top:-5px;width:24px;height:18px;background:#2a2a2a;border:1px solid #3e3e3e;border-radius:4.5px"></div>
<svg class="abs" style="left:191px;top:0;width:8px;height:8px" viewBox="0 0 8 8"><path d="M1.2 2.2 L4 5 L6.8 2.2" fill="none" stroke="#e0e0e0" stroke-width="1.2" stroke-linecap="round" stroke-linejoin="round"/></svg>
<div id="prtabs">
<div class="abs" style="left:2.8px;top:6px;width:26px;height:28.3px;background:#272727;border-radius:4.5px 0 0 4.5px"></div>
<div class="ptab" style="top:8.3px;left:0.6px"><svg viewBox="0 0 16 16" style="color:#d4d4d4"><path d="M3 1.4V7.4" stroke="currentColor" stroke-width="1.2" stroke-opacity=".85"/><ellipse cx="3.1" cy="11.1" rx="2.4" ry="3.6" fill="currentColor" fill-opacity=".78"/><path d="M8.1 1.4V4Q8.1 6.4 10.2 7V13.6Q10.2 14.8 11.6 14.8Q13 14.8 13 13.6V7Q15.1 6.4 15.1 4V1.4L13.4 2V4.4Q13.4 5 12.8 5H10.4Q9.8 5 9.8 4.4V2Z" fill="currentColor"/></svg></div>
<div class="abs" style="left:2.8px;top:43px;width:26px;height:132px;background:#272727;border-radius:4.5px 0 0 4.5px"></div>
<div class="ptab" style="top:42.2px"><svg viewBox="0 0 16 16" style="color:#dcdcdc"><path d="M2.5 4H4.6L5.3 2.8H8.8L9.5 4H13.8Q15 4 15 5.2V13.2Q15 14.4 13.8 14.4H2.5Q1.3 14.4 1.3 13.2V5.2Q1.3 4 2.5 4Z" fill="none" stroke="currentColor" stroke-width="1.3"/><rect x="3.2" y="6.2" width="7.8" height="6.2" fill="currentColor" fill-opacity=".45"/><path d="M3.2 8.3H11M3.2 10.4H11" stroke="#1e1e1e" stroke-width=".7"/><circle cx="13" cy="7.2" r="0.9" fill="currentColor"/><circle cx="13" cy="11.2" r="0.9" fill="currentColor"/><circle cx="13.4" cy="2.2" r="0.8" fill="currentColor" fill-opacity=".7"/></svg></div>
<div class="ptab" style="top:69.0px"><svg viewBox="0 0 16 16" style="color:#dcdcdc"><path d="M2.2 2H13.6Q15 2 15 3.4V8.2H0.8V3.4Q0.8 2 2.2 2Z" fill="currentColor"/><path d="M0.8 4.4H15" stroke="#1e1e1e" stroke-opacity=".35" stroke-width="1"/><rect x="3.9" y="8.2" width="8" height="7.2" fill="currentColor" fill-opacity=".62"/><path d="M5.2 14.2L8 10.2L9.4 12L10.2 11L10.8 14.2Z" fill="#1e1e1e" fill-opacity=".8"/></svg></div>
<div class="ptab" style="top:95.7px"><svg viewBox="0 0 16 16" style="color:#dcdcdc"><rect x="0.8" y="5.6" width="9.6" height="9.6" rx="0.8" fill="currentColor" fill-opacity=".3"/><rect x="2.6" y="3.8" width="9.6" height="9.6" rx="0.8" fill="#5a5a5a"/><rect x="5.1" y="1.4" width="9.6" height="9.6" rx="0.8" fill="#262626" stroke="currentColor" stroke-width="1.2"/><path d="M6.2 9.9L9 5.2L10.6 7.8L11.4 6.9L13.4 9.9Z" fill="currentColor"/><circle cx="12.5" cy="3.9" r="0.8" fill="currentColor"/></svg></div>
<div class="ptab" style="top:122.7px"><svg viewBox="0 0 16 16" style="color:#dcdcdc"><path d="M5.4 1.4Q6.1 1.2 6.5 2L9.6 10.6Q9.8 11.6 8.8 11.9Q5.4 12.8 2 11.9Q1 11.6 1.3 10.6L4.4 2Q4.7 1.4 5.4 1.4Z" fill="currentColor" fill-opacity=".6"/><circle cx="11.5" cy="11.1" r="3" fill="#262626" stroke="currentColor" stroke-width="1.2"/><path d="M9.9 10.5Q10.2 9.4 11.2 9.2" fill="none" stroke="currentColor" stroke-width=".9"/><circle cx="12.9" cy="3.2" r="1.5" fill="currentColor" fill-opacity=".8"/></svg></div>
<div class="abs" style="left:2.8px;top:149.3px;width:26px;height:26.6px;background:#2f2f2f;border-radius:4.5px 0 0 4.5px"></div>
<div class="ptab" style="top:149.3px"><svg viewBox="0 0 16 16" style="color:#cf5d68"><circle cx="7.8" cy="8.2" r="5.7" fill="none" stroke="currentColor" stroke-width="1.2"/><path d="M4.2 4.4Q6 3.6 7.6 4.4Q8.6 5.4 7.4 6.4Q6 6.6 6.2 7.8Q5 8.4 3.6 7.2Q3 5.6 4.2 4.4ZM7.4 8.8Q9 8.2 10.4 9.2Q11.2 10.4 10 11.6Q9.2 13 8.2 12.2Q7.6 11 7 10.4Q6.6 9.4 7.4 8.8Z" fill="currentColor"/><path d="M1.6 13.8L4 11.8M11.8 4.8L14.4 2.4" stroke="currentColor" stroke-width="1.1" stroke-linecap="round"/></svg></div>
<div class="abs" style="left:2.8px;top:183.7px;width:26px;height:257.9px;background:#272727;border-radius:4.5px 0 0 4.5px"></div>
<div class="ptab" style="top:184.2px"><svg viewBox="0 0 16 16" style="color:#dcdcdc"><rect x="0.9" y="1.6" width="14.2" height="3.2" rx="0.6" fill="none" stroke="currentColor" stroke-width="1.3"/><path d="M2.2 5.2V13.4Q2.2 14.2 3 14.2H13Q13.8 14.2 13.8 13.4V5.2" fill="none" stroke="currentColor" stroke-width="1.3"/><path d="M6.2 8.3H9.8" stroke="currentColor" stroke-width="1.6" stroke-linecap="round"/></svg></div>
<svg class="abs" style="left:10.9px;top:457px;width:10px;height:8px" viewBox="0 0 10 8"><path d="M1.5 2 L5 5.5 L8.5 2" fill="none" stroke="#555" stroke-width="1.2" stroke-linecap="round" stroke-linejoin="round"/></svg>
</div>
<div class="abs" style="left:38.4px;top:25px;width:16px;height:16px"><svg viewBox="0 0 16 16" style="color:#dcdcdc"><rect x="4.1" y="4.2" width="7.9" height="7.8" rx="0.9" fill="currentColor"/><path d="M0.9 4.5V2.3Q0.9 1.1 2.1 1.1H4.3M11.7 1.1H13.9Q15.1 1.1 15.1 2.3V4.5M15.1 11.6V13.8Q15.1 15 13.9 15H11.7M4.3 15H2.1Q0.9 15 0.9 13.8V11.6" fill="none" stroke="currentColor" stroke-opacity=".62" stroke-width="1.2"/></svg></div>
<div class="abs" style="left:62.2px;top:26.2px;height:17px;line-height:17px;font-size:11px;color:#e6e6e6">Cube</div>
<div class="abs" style="left:175.8px;top:26.8px;width:16px;height:16px"><svg viewBox="0 0 16 16" style="color:#a0a0a0"><g transform="translate(9.2 6.8) rotate(45)" fill="none" stroke="currentColor" stroke-width="1.15" stroke-linejoin="round" stroke-linecap="round"><path d="M-2.6 -7.4H2.6V-5.6H1.9V-1.9Q4 -0.9 4 1H-4Q-4 -0.9 -1.9 -1.9V-5.6H-2.6Z"/><path d="M0 1.2V7.4"/></g></svg></div>
<div class="abs" style="left:36.8px;top:58.4px;width:158px;height:18px;background:#1d1d1d;border:1px solid #3d3d3d;border-radius:4.5px;overflow:hidden"><div class="abs" style="left:0;top:0;width:29.5px;height:18px;background:#2a2a2a;border-right:1px solid #3d3d3d"></div></div>
<div class="abs" style="left:39.6px;top:59.4px;width:16px;height:16px"><svg viewBox="0 0 16 16" style="color:#dcdcdc"><rect x="4.1" y="4.2" width="7.9" height="7.8" rx="0.9" fill="currentColor"/><path d="M0.9 4.5V2.3Q0.9 1.1 2.1 1.1H4.3M11.7 1.1H13.9Q15.1 1.1 15.1 2.3V4.5M15.1 11.6V13.8Q15.1 15 13.9 15H11.7M4.3 15H2.1Q0.9 15 0.9 13.8V11.6" fill="none" stroke="currentColor" stroke-opacity=".62" stroke-width="1.2"/></svg></div>
<svg class="abs" style="left:56.5px;top:63.5px;width:8px;height:8px" viewBox="0 0 8 8"><path d="M1.2 2.2 L4 5 L6.8 2.2" fill="none" stroke="#e0e0e0" stroke-width="1.2" stroke-linecap="round" stroke-linejoin="round"/></svg>
<div class="abs" style="left:74.5px;top:60.3px;height:17px;line-height:17.4px;font-size:11px;color:#e6e6e6">Cube</div>
<div class="panel" style="top:87px;height:371.5px">
<svg class="abs" style="left:7px;top:8px;width:10px;height:9px" viewBox="0 0 10 9"><path d="M1.2 2.5 L5 6.3 L8.8 2.5" fill="none" stroke="#e0e0e0" stroke-width="1.25" stroke-linecap="round" stroke-linejoin="round"/></svg>
<div class="ph" style="left:21.8px;top:5px">トランスフォーム</div>
<svg class="abs" style="left:138.5px;top:9.5px;width:12px;height:6px" viewBox="0 0 12 6"><rect x="0.2" y="0.0" width="1.3" height="1.3" fill="#6a6a6a"/><rect x="0.2" y="3.2" width="1.3" height="1.3" fill="#6a6a6a"/><rect x="3.2" y="0.0" width="1.3" height="1.3" fill="#6a6a6a"/><rect x="3.2" y="3.2" width="1.3" height="1.3" fill="#6a6a6a"/><rect x="6.2" y="0.0" width="1.3" height="1.3" fill="#6a6a6a"/><rect x="6.2" y="3.2" width="1.3" height="1.3" fill="#6a6a6a"/><rect x="9.2" y="0.0" width="1.3" height="1.3" fill="#6a6a6a"/><rect x="9.2" y="3.2" width="1.3" height="1.3" fill="#6a6a6a"/></svg>
<div class="flb" style="top:31.7px;right:104.8px">位置 X</div>
<div class="fld" style="top:31.7px;left:62.2px;border-radius:4.5px 0 0 0">0 m</div>
<div class="abs" style="left:113px;top:32.9px;width:16px;height:16px"><svg viewBox="0 0 16 16" style="color:#9a9a9a"><rect x="3.7" y="8.6" width="8.8" height="5.5" rx="0.7" fill="none" stroke="currentColor" stroke-width="1.15"/><rect x="7.4" y="10.6" width="1.5" height="1.5" fill="currentColor"/><path d="M4.9 8.4V5.4Q4.9 2.4 7.9 2.4Q10.8 2.4 11 5.2" fill="none" stroke="currentColor" stroke-width="1.2" stroke-linecap="round"/></svg></div>
<div class="dot" style="left:138.6px;top:38.7px"></div>
<div class="flb" style="top:50.8px;right:104.8px">Y</div>
<div class="fld" style="top:50.8px;left:62.2px;border-radius:0">0 m</div>
<div class="abs" style="left:113px;top:52.0px;width:16px;height:16px"><svg viewBox="0 0 16 16" style="color:#9a9a9a"><rect x="3.7" y="8.6" width="8.8" height="5.5" rx="0.7" fill="none" stroke="currentColor" stroke-width="1.15"/><rect x="7.4" y="10.6" width="1.5" height="1.5" fill="currentColor"/><path d="M4.9 8.4V5.4Q4.9 2.4 7.9 2.4Q10.8 2.4 11 5.2" fill="none" stroke="currentColor" stroke-width="1.2" stroke-linecap="round"/></svg></div>
<div class="dot" style="left:138.6px;top:57.8px"></div>
<div class="flb" style="top:70.0px;right:104.8px">Z</div>
<div class="fld" style="top:70.0px;left:62.2px;border-radius:0 0 0 4.5px">0 m</div>
<div class="abs" style="left:113px;top:71.2px;width:16px;height:16px"><svg viewBox="0 0 16 16" style="color:#9a9a9a"><rect x="3.7" y="8.6" width="8.8" height="5.5" rx="0.7" fill="none" stroke="currentColor" stroke-width="1.15"/><rect x="7.4" y="10.6" width="1.5" height="1.5" fill="currentColor"/><path d="M4.9 8.4V5.4Q4.9 2.4 7.9 2.4Q10.8 2.4 11 5.2" fill="none" stroke="currentColor" stroke-width="1.2" stroke-linecap="round"/></svg></div>
<div class="dot" style="left:138.6px;top:77.0px"></div>
<div class="flb" style="top:94.1px;right:104.8px">回転 X</div>
<div class="fld" style="top:94.1px;left:62.2px;border-radius:4.5px 0 0 0">0°</div>
<div class="abs" style="left:113px;top:95.3px;width:16px;height:16px"><svg viewBox="0 0 16 16" style="color:#9a9a9a"><rect x="3.7" y="8.6" width="8.8" height="5.5" rx="0.7" fill="none" stroke="currentColor" stroke-width="1.15"/><rect x="7.4" y="10.6" width="1.5" height="1.5" fill="currentColor"/><path d="M4.9 8.4V5.4Q4.9 2.4 7.9 2.4Q10.8 2.4 11 5.2" fill="none" stroke="currentColor" stroke-width="1.2" stroke-linecap="round"/></svg></div>
<div class="dot" style="left:138.6px;top:101.1px"></div>
<div class="flb" style="top:113.2px;right:104.8px">Y</div>
<div class="fld" style="top:113.2px;left:62.2px;border-radius:0">0°</div>
<div class="abs" style="left:113px;top:114.4px;width:16px;height:16px"><svg viewBox="0 0 16 16" style="color:#9a9a9a"><rect x="3.7" y="8.6" width="8.8" height="5.5" rx="0.7" fill="none" stroke="currentColor" stroke-width="1.15"/><rect x="7.4" y="10.6" width="1.5" height="1.5" fill="currentColor"/><path d="M4.9 8.4V5.4Q4.9 2.4 7.9 2.4Q10.8 2.4 11 5.2" fill="none" stroke="currentColor" stroke-width="1.2" stroke-linecap="round"/></svg></div>
<div class="dot" style="left:138.6px;top:120.2px"></div>
<div class="flb" style="top:132.3px;right:104.8px">Z</div>
<div class="fld" style="top:132.3px;left:62.2px;border-radius:0">0°</div>
<div class="abs" style="left:113px;top:133.5px;width:16px;height:16px"><svg viewBox="0 0 16 16" style="color:#9a9a9a"><rect x="3.7" y="8.6" width="8.8" height="5.5" rx="0.7" fill="none" stroke="currentColor" stroke-width="1.15"/><rect x="7.4" y="10.6" width="1.5" height="1.5" fill="currentColor"/><path d="M4.9 8.4V5.4Q4.9 2.4 7.9 2.4Q10.8 2.4 11 5.2" fill="none" stroke="currentColor" stroke-width="1.2" stroke-linecap="round"/></svg></div>
<div class="dot" style="left:138.6px;top:139.3px"></div>
</div>
<div class="panel" style="top:461.3px;height:22.7px">
<svg class="abs" style="left:8px;top:6.5px;width:8px;height:10px" viewBox="0 0 8 10"><path d="M2 1.2 L5.8 5 L2 8.8" fill="none" stroke="#e0e0e0" stroke-width="1.25" stroke-linecap="round" stroke-linejoin="round"/></svg>
<div class="ph" style="top:5px;left:21.5px">シェーディング</div>
<svg class="abs" style="left:138.5px;top:9px;width:12px;height:6px" viewBox="0 0 12 6"><rect x="0.2" y="0.0" width="1.3" height="1.3" fill="#6a6a6a"/><rect x="0.2" y="3.2" width="1.3" height="1.3" fill="#6a6a6a"/><rect x="3.2" y="0.0" width="1.3" height="1.3" fill="#6a6a6a"/><rect x="3.2" y="3.2" width="1.3" height="1.3" fill="#6a6a6a"/><rect x="6.2" y="0.0" width="1.3" height="1.3" fill="#6a6a6a"/><rect x="6.2" y="3.2" width="1.3" height="1.3" fill="#6a6a6a"/><rect x="9.2" y="0.0" width="1.3" height="1.3" fill="#6a6a6a"/><rect x="9.2" y="3.2" width="1.3" height="1.3" fill="#6a6a6a"/></svg>
</div>
<div class="panel" style="top:486.6px;height:22.7px">
<svg class="abs" style="left:8px;top:6.5px;width:8px;height:10px" viewBox="0 0 8 10"><path d="M2 1.2 L5.8 5 L2 8.8" fill="none" stroke="#e0e0e0" stroke-width="1.25" stroke-linecap="round" stroke-linejoin="round"/></svg>
<div class="ph" style="top:5px;left:21.5px">可視性</div>
<svg class="abs" style="left:138.5px;top:9px;width:12px;height:6px" viewBox="0 0 12 6"><rect x="0.2" y="0.0" width="1.3" height="1.3" fill="#6a6a6a"/><rect x="0.2" y="3.2" width="1.3" height="1.3" fill="#6a6a6a"/><rect x="3.2" y="0.0" width="1.3" height="1.3" fill="#6a6a6a"/><rect x="3.2" y="3.2" width="1.3" height="1.3" fill="#6a6a6a"/><rect x="6.2" y="0.0" width="1.3" height="1.3" fill="#6a6a6a"/><rect x="6.2" y="3.2" width="1.3" height="1.3" fill="#6a6a6a"/><rect x="9.2" y="0.0" width="1.3" height="1.3" fill="#6a6a6a"/><rect x="9.2" y="3.2" width="1.3" height="1.3" fill="#6a6a6a"/></svg>
</div>
<div class="abs" style="left:197.6px;top:17px;width:2.6px;height:490px;background:#464646;border-radius:1.3px"></div>
</div>
<div class="abs" style="left:998.9px;top:0;width:1.1px;height:23px;background:#1f1f5c"></div>
<div class="abs" style="left:998.9px;top:23px;width:1.1px;height:478px;background:linear-gradient(#8e8e8e 0,#585858 40px,#484848 120px,#444 478px)"></div>
<svg class="abs" style="left:0;top:0;width:316.4px;height:501px;overflow:hidden" viewBox="0 0 316.4 501">
<g stroke="#fcb017" stroke-width="2.1" fill="none" stroke-linecap="round" stroke-linejoin="round">
<path d="M262.6 162.8L317.5 207.6M293.2 173.4L317.5 207.6M282.4 207.9L317.5 207.6"/>
<path d="M119.2 341.8L190.4 316.5M159.5 306.7L190.4 316.5M172.2 341.8L190.4 316.5"/>
</g></svg>
<div id="menu">
<div class="hd" style="left:7.5px">全般</div>
<div class="sep" style="left:7px;width:217px"></div>
<div class="it" style="left:2px;top:35.3px;width:225px"><svg viewBox="0 0 16 16" style="color:#e6e6e6"><circle cx="11.1" cy="5" r="3.5" fill="currentColor"/><circle cx="10" cy="3.9" r="1.1" fill="#181818" fill-opacity=".35"/><path d="M0 9.6H14.4M0 12.4H14.6M4.6 6.3L2.6 14.8M9.8 8.2L12.5 14.8" stroke="currentColor" stroke-width="1.15" fill="none" stroke-opacity=".9"/></svg><span class="lb">3<u>D</u>ビューポート</span><span class="sc"><i>⇧</i>F5</span></div>
<div class="it" style="left:2px;top:56.5px;width:225px"><svg viewBox="0 0 16 16" style="color:#e6e6e6"><rect x="0.65" y="2.4" width="13.6" height="13" fill="none" stroke="currentColor" stroke-opacity=".78" stroke-width="1.3"/><path d="M4.6 2.6H14.2V7H11.6V10.6Q11.6 11.4 10.6 11.4H9.2Q8.2 11.4 8.2 10.6V7H4.6Z" fill="currentColor"/></svg><span class="lb">画像エディター</span><span class="sc"><i>⇧</i>F10</span></div>
<div class="it sel" style="left:2px;top:77.7px;width:225px"><svg viewBox="0 0 16 16" style="color:#e6e6e6"><rect x="4.4" y="1.3" width="10" height="12" fill="currentColor"/><rect x="6.60" y="2.70" width="1.42" height="1.6" fill="#4772b3"/><rect x="6.60" y="5.90" width="1.42" height="1.6" fill="#4772b3"/><rect x="6.60" y="9.10" width="1.42" height="1.6" fill="#4772b3"/><rect x="8.02" y="4.30" width="1.42" height="1.6" fill="#4772b3"/><rect x="8.02" y="7.50" width="1.42" height="1.6" fill="#4772b3"/><rect x="8.02" y="10.70" width="1.42" height="1.6" fill="#4772b3"/><rect x="9.44" y="2.70" width="1.42" height="1.6" fill="#4772b3"/><rect x="9.44" y="5.90" width="1.42" height="1.6" fill="#4772b3"/><rect x="9.44" y="9.10" width="1.42" height="1.6" fill="#4772b3"/><rect x="10.86" y="4.30" width="1.42" height="1.6" fill="#4772b3"/><rect x="10.86" y="7.50" width="1.42" height="1.6" fill="#4772b3"/><rect x="10.86" y="10.70" width="1.42" height="1.6" fill="#4772b3"/><rect x="12.28" y="2.70" width="1.42" height="1.6" fill="#4772b3"/><rect x="12.28" y="5.90" width="1.42" height="1.6" fill="#4772b3"/><rect x="12.28" y="9.10" width="1.42" height="1.6" fill="#4772b3"/><path d="M5.6 3V13.3" stroke="#4772b3" stroke-width="0.9"/><path d="M3.4 2.9H8" stroke="#4772b3" stroke-width="0.8"/><rect x="0.4" y="1.9" width="4.1" height="13.4" rx="1.8" fill="currentColor"/></svg><span class="lb"><u>U</u>Vエディター</span><span class="sc"><i>⇧</i>F10</span></div>
<div class="it" style="left:2px;top:98.9px;width:225px"><svg viewBox="0 0 16 16" style="color:#e6e6e6"><circle cx="10.75" cy="11" r="3.75" fill="currentColor"/><circle cx="3.9" cy="8.4" r="2.5" fill="currentColor" fill-opacity=".68"/><circle cx="1.9" cy="2.8" r="1.6" fill="currentColor" fill-opacity=".5"/><circle cx="6.8" cy="3.4" r="1.75" fill="currentColor" fill-opacity=".5"/></svg><span class="lb">ジオメトリノードエディター</span><span class="sc"><i>⇧</i>F3</span></div>
<div class="it" style="left:2px;top:120.1px;width:225px"><svg viewBox="0 0 16 16" style="color:#e6e6e6"><rect x="0.4" y="5.6" width="9.4" height="9.4" rx="0.8" fill="currentColor" fill-opacity=".3"/><rect x="2.6" y="3.6" width="9.4" height="9.4" rx="0.8" fill="#5e5e5e"/><rect x="5" y="1.2" width="9.6" height="9.6" rx="0.8" fill="currentColor"/><path d="M6 2.2H12.4L6 8.6Z" fill="#181818"/></svg><span class="lb">コンポジター</span><span class="sc"><i>⇧</i>F3</span></div>
<div class="it" style="left:2px;top:141.3px;width:225px"><svg viewBox="0 0 16 16" style="color:#e6e6e6"><circle cx="7.5" cy="8.1" r="6.6" fill="none" stroke="currentColor" stroke-width="1.3"/><path d="M3.4 7.6Q3.6 5.3 5.4 4.4" fill="none" stroke="currentColor" stroke-width="1.5" stroke-linecap="round"/><circle cx="7.3" cy="3.9" r="0.8" fill="currentColor"/></svg><span class="lb">シェーダーエディター</span><span class="sc"><i>⇧</i>F3</span></div>
<div class="it" style="left:2px;top:162.5px;width:225px"><svg viewBox="0 0 16 16" style="color:#e6e6e6"><rect x="0.6" y="1.9" width="13.8" height="12.8" rx="0.8" fill="none" stroke="currentColor" stroke-width="1.2" stroke-opacity=".85"/><rect x="0.6" y="1.9" width="13.8" height="3" fill="currentColor"/><rect x="0.60" y="4.90" width="1.72" height="1.72" fill="currentColor" fill-opacity="0.85"/><rect x="4.04" y="4.90" width="1.72" height="1.72" fill="currentColor" fill-opacity="0.85"/><rect x="7.48" y="4.90" width="1.72" height="1.72" fill="currentColor" fill-opacity="0.85"/><rect x="10.92" y="4.90" width="1.72" height="1.72" fill="currentColor" fill-opacity="0.85"/><rect x="2.32" y="6.62" width="1.72" height="1.72" fill="currentColor" fill-opacity="0.60"/><rect x="5.76" y="6.62" width="1.72" height="1.72" fill="currentColor" fill-opacity="0.60"/><rect x="9.20" y="6.62" width="1.72" height="1.72" fill="currentColor" fill-opacity="0.60"/><rect x="12.64" y="6.62" width="1.72" height="1.72" fill="currentColor" fill-opacity="0.60"/><rect x="0.60" y="8.34" width="1.72" height="1.72" fill="currentColor" fill-opacity="0.35"/><rect x="4.04" y="8.34" width="1.72" height="1.72" fill="currentColor" fill-opacity="0.35"/><rect x="7.48" y="8.34" width="1.72" height="1.72" fill="currentColor" fill-opacity="0.35"/><rect x="10.92" y="8.34" width="1.72" height="1.72" fill="currentColor" fill-opacity="0.35"/></svg><span class="lb">テクスチャノードエディター</span><span class="sc"><i>⇧</i>F3</span></div>
<div class="it" style="left:2px;top:183.7px;width:225px"><svg viewBox="0 0 16 16" style="color:#e6e6e6"><rect x="1.9" y="9" width="12.4" height="5.6" fill="currentColor"/><rect x="1.9" y="6.7" width="12.4" height="1.4" fill="currentColor" fill-opacity=".9"/><rect x="0.9" y="3.6" width="2.4" height="4.4" fill="none" stroke="currentColor" stroke-width="1" stroke-opacity=".9"/><g transform="rotate(-14 4 5)" fill="currentColor"><rect x="4.2" y="3.3" width="2" height="2.1"/><rect x="7.4" y="3.3" width="2" height="2.1"/><rect x="10.6" y="3.3" width="2" height="2.1"/></g></svg><span class="lb">ビデオシーケンサー</span><span class="sc"><i>⇧</i>F8</span></div>
<div class="it" style="left:2px;top:204.9px;width:225px"><svg viewBox="0 0 16 16" style="color:#e6e6e6"><rect x="4.9" y="5.9" width="5" height="5" fill="none" stroke="currentColor" stroke-width="1.2"/><rect x="6.8" y="7.8" width="1.3" height="1.3" fill="currentColor" fill-opacity=".7"/><path d="M0 8.4H4.6M10.2 8.4H15M7.4 0.8V5.6M7.4 11.2V16" stroke="currentColor" stroke-width="1.3"/></svg><span class="lb">動画クリップエディター</span><span class="sc"><i>⇧</i>F2</span></div>
<div class="hd" style="left:237.5px">アニメーション</div>
<div class="sep" style="left:237px;width:175.5px"></div>
<div class="it" style="left:232px;top:35.3px;width:183.5px"><svg viewBox="0 0 16 16" style="color:#e6e6e6"><rect x="4.2" y="1.8" width="7.6" height="3.7" fill="currentColor" fill-opacity=".5"/><path d="M2.4 1.4L4.7 3.65L2.4 5.9L0.1 3.65ZM13.4 1.4L15.7 3.65L13.4 5.9L11.1 3.65Z" fill="currentColor"/><path d="M7.9 8.5L10.9 11.5L7.9 14.5L4.9 11.5Z" fill="none" stroke="currentColor" stroke-width="1.4"/></svg><span class="lb">ドープシート</span><span class="sc"><i>⇧</i>F12</span></div>
<div class="it" style="left:232px;top:56.5px;width:183.5px"><svg viewBox="0 0 16 16" style="color:#e6e6e6"><circle cx="7.7" cy="7.7" r="7.1" fill="currentColor"/><path d="M10.3 4.3L7.6 8L10 11.7" fill="none" stroke="#181818" stroke-width="1.7" stroke-linecap="round" stroke-linejoin="round"/></svg><span class="lb">タイムライン</span><span class="sc"><i>⇧</i>F12</span></div>
<div class="it" style="left:232px;top:77.7px;width:183.5px"><svg viewBox="0 0 16 16" style="color:#e6e6e6"><path d="M1 2.8C4.5 3.2 5.2 6.2 6.4 8.6C7.6 11.2 7.8 13.9 10 13.9C12 13.9 12.4 11.8 14.4 11.8" fill="none" stroke="currentColor" stroke-opacity=".75" stroke-width="1"/><path d="M14.4 2.3C9.2 2.3 10.6 9.3 5.6 9.3H0.9" fill="none" stroke="currentColor" stroke-width="1.7" stroke-linecap="round"/></svg><span class="lb">グラフエディター</span><span class="sc"><i>⇧</i>F6</span></div>
<div class="it" style="left:232px;top:98.9px;width:183.5px"><svg viewBox="0 0 16 16" style="color:#e6e6e6"><path d="M2.35 1.9L4.6 5.9H0.1Z" fill="currentColor"/><rect x="10.3" y="10.2" width="4.3" height="4.7" fill="currentColor"/><path d="M5.2 3.6C8 2.2 10.2 4.4 8.6 6.6C7.4 8.2 4.6 9.4 6 11.6C6.8 12.6 8.2 12.6 9.6 12.6" fill="none" stroke="currentColor" stroke-width="1.3" stroke-linecap="round"/></svg><span class="lb">ドライバー</span><span class="sc"><i>⇧</i>F6</span></div>
<div class="it" style="left:232px;top:120.1px;width:183.5px"><svg viewBox="0 0 16 16" style="color:#e6e6e6"><path d="M8 1.6V15" stroke="currentColor" stroke-width="1.3"/><path d="M6.6 2.4H3Q1.8 2.4 1.8 3.5Q1.8 4.7 3 4.7H6.6M6.6 6.3H1.6Q0.5 6.3 0.5 7.4Q0.5 8.6 1.6 8.6H6.6" fill="none" stroke="currentColor" stroke-width="1.25"/><path d="M9.4 2.4H13Q14.2 2.4 14.2 3.5Q14.2 4.7 13 4.7H9.4M9.4 6.3H12.4Q13.5 6.3 13.5 7.4Q13.5 8.6 12.4 8.6H9.4" fill="none" stroke="currentColor" stroke-width="1.25"/><rect x="1.8" y="10.8" width="4.6" height="4.4" fill="currentColor"/><rect x="9.6" y="10.8" width="4.8" height="4.4" fill="currentColor"/></svg><span class="lb">ノンリニアアニメーション</span></div>
<div class="hd" style="left:427.5px">スクリプト作成</div>
<div class="sep" style="left:427px;width:180px"></div>
<div class="it" style="left:422px;top:35.3px;width:188px"><svg viewBox="0 0 16 16" style="color:#e6e6e6"><rect x="0.9" y="1" width="12.8" height="13.8" rx="0.8" fill="currentColor" fill-opacity=".93"/><path d="M2.4 1.6V14.4" stroke="#181818" stroke-width="1.1" stroke-dasharray="1.3 1.05" stroke-opacity=".55"/><path d="M4.9 3.7H11.8M4.9 5.9H11.8M4.9 8.1H11.8M4.9 10.2H9" stroke="#181818" stroke-width="1.05" stroke-opacity=".8"/></svg><span class="lb">テキストエディター</span><span class="sc"><i>⇧</i>F11</span></div>
<div class="it" style="left:422px;top:56.5px;width:188px"><svg viewBox="0 0 16 16" style="color:#e6e6e6"><rect x="0.65" y="1.85" width="13.6" height="12.9" rx="0.9" fill="none" stroke="currentColor" stroke-width="1.3" stroke-opacity=".85"/><path d="M3.4 5.2L6 7.2L3.4 9.2M6.8 9.5H10" fill="none" stroke="currentColor" stroke-width="1.15"/></svg><span class="lb"><u>P</u>ythonコンソール</span><span class="sc"><i>⇧</i>F4</span></div>
<div class="it" style="left:422px;top:77.7px;width:188px"><svg viewBox="0 0 16 16" style="color:#e6e6e6"><path d="M2.6 1.1H12Q14.2 1.1 14.2 3.3V10.4Q14.2 12.6 12 12.6H6.2L3.4 15.6V12.6H2.6Q0.4 12.6 0.4 10.4V3.3Q0.4 1.1 2.6 1.1Z" fill="currentColor"/><circle cx="7.4" cy="3.9" r="1.15" fill="#181818"/><path d="M5.7 6.1H8.3V10.3H9.4V11.4H5.5V10.3H6.6V7.2H5.7Z" fill="#181818"/></svg><span class="lb">情報</span></div>
<div class="hd" style="left:621.5px">データ</div>
<div class="sep" style="left:621px;width:172.5px"></div>
<div class="it" style="left:616px;top:35.3px;width:180.5px"><svg viewBox="0 0 16 16" style="color:#e6e6e6"><rect x="0.2" y="1" width="5.4" height="3.1" rx="0.7" fill="currentColor"/><rect x="7.2" y="6.9" width="7" height="3.3" rx="0.7" fill="currentColor"/><rect x="7.2" y="11.9" width="7" height="3.3" rx="0.7" fill="currentColor"/><path d="M2.9 4.6V13.5H6.4M2.9 8.5H6.4" fill="none" stroke="currentColor" stroke-opacity=".55" stroke-width="1.1"/></svg><span class="lb">アウトライナー</span><span class="sc"><i>⇧</i>F9</span></div>
<div class="it" style="left:616px;top:56.5px;width:180.5px"><svg viewBox="0 0 16 16" style="color:#e6e6e6"><rect x="0.2" y="1.3" width="13.9" height="5.6" rx="2.8" fill="currentColor"/><rect x="6.6" y="2.5" width="6.4" height="3.2" rx="1.6" fill="#181818"/><rect x="0.2" y="9.4" width="13.9" height="5.6" rx="2.8" fill="currentColor"/><rect x="10" y="10.6" width="3" height="3.2" rx="1.3" fill="#181818"/></svg><span class="lb">プロパティ</span><span class="sc"><i>⇧</i>F7</span></div>
<div class="it" style="left:616px;top:77.7px;width:180.5px"><svg viewBox="0 0 16 16" style="color:#e6e6e6"><path d="M0.9 1.1H4.8Q5.5 1.1 5.5 1.8V3.4H0.2V1.8Q0.2 1.1 0.9 1.1Z" fill="currentColor"/><rect x="0.2" y="3.2" width="14" height="2.5" fill="currentColor" fill-opacity=".85"/><path d="M0.2 6.6H14.2V13.6Q14.2 14.3 13.5 14.3H0.9Q0.2 14.3 0.2 13.6Z" fill="currentColor"/></svg><span class="lb">ファイルブラウザー</span><span class="sc"><i>⇧</i>F1</span></div>
<div class="it" style="left:616px;top:98.9px;width:180.5px"><svg viewBox="0 0 16 16" style="color:#e6e6e6"><path d="M0.2 13.9H2.9L6.8 4.7L4.6 3.9Z" fill="currentColor"/><rect x="7.2" y="1.4" width="3" height="12.8" fill="currentColor"/><rect x="8.2" y="2.6" width="1" height="10.6" fill="#181818" fill-opacity=".3"/><rect x="11.2" y="2.7" width="3.1" height="11.5" fill="currentColor" fill-opacity=".72"/></svg><span class="lb">アセットブラウザー</span><span class="sc"><i>⇧</i>F1</span></div>
<div class="it" style="left:616px;top:120.1px;width:180.5px"><svg viewBox="0 0 16 16" style="color:#e6e6e6"><rect x="0.1" y="1.8" width="14.8" height="12.6" fill="none" stroke="currentColor" stroke-opacity=".6" stroke-width="1"/><path d="M4.85 1.8V14.4" stroke="currentColor" stroke-width="2.7"/><path d="M0.1 9.3H14.9" stroke="currentColor" stroke-width="2.3"/></svg><span class="lb">スプレッドシート</span></div>
<div class="it" style="left:616px;top:141.3px;width:180.5px"><svg viewBox="0 0 16 16" style="color:#e6e6e6"><path d="M12.06 6.93L14.14 7.17L14.14 9.03L12.06 9.27L11.46 10.71L12.76 12.35L11.45 13.66L9.81 12.36L8.37 12.96L8.13 15.04L6.27 15.04L6.03 12.96L4.59 12.36L2.95 13.66L1.64 12.35L2.94 10.71L2.34 9.27L0.26 9.03L0.26 7.17L2.34 6.93L2.94 5.49L1.64 3.85L2.95 2.54L4.59 3.84L6.03 3.24L6.27 1.16L8.13 1.16L8.37 3.24L9.81 3.84L11.45 2.54L12.76 3.85L11.46 5.49Z" fill="currentColor" stroke="currentColor" stroke-width=".6" stroke-linejoin="round"/><circle cx="7.2" cy="8.1" r="2.3" fill="#181818"/></svg><span class="lb">プリファレンス</span></div>
</div>
</div>
</body></html>
